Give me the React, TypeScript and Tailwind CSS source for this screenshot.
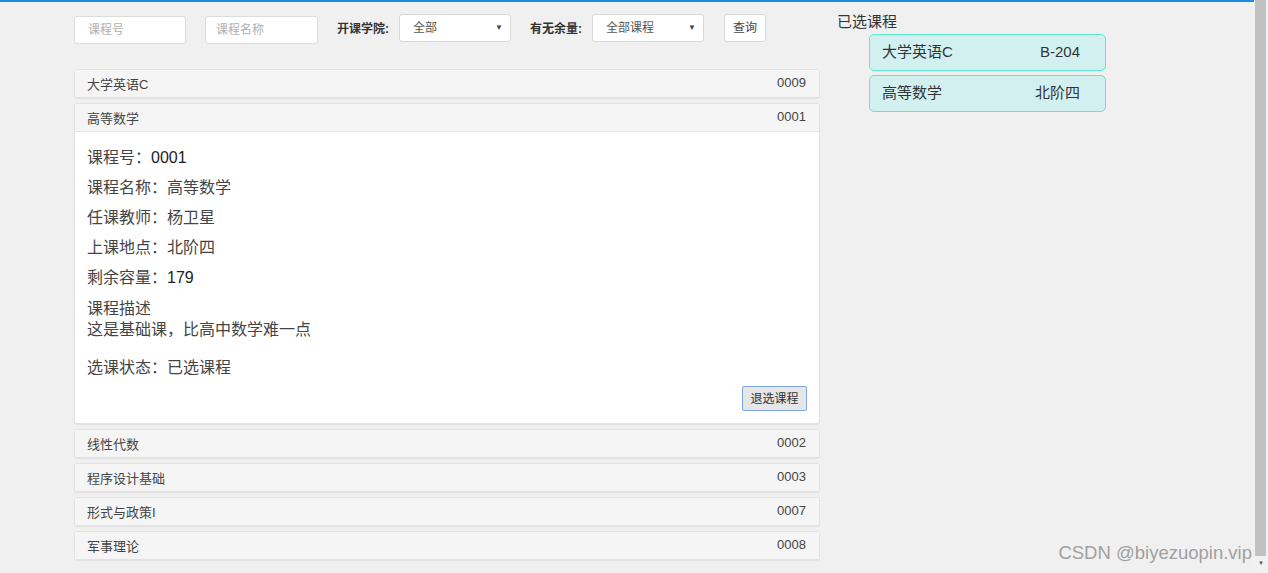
import React from "react";

const courses = [
  { name: "大学英语C", id: "0009" },
  { name: "高等数学", id: "0001", open: true },
  { name: "线性代数", id: "0002" },
  { name: "程序设计基础", id: "0003" },
  { name: "形式与政策I", id: "0007" },
  { name: "军事理论", id: "0008" },
];

const selected = [
  { name: "大学英语C", room: "B-204" },
  { name: "高等数学", room: "北阶四" },
];

function Select({ value }: { value: string }) {
  return (
    <div className="flex h-[28px] w-[112px] items-center justify-between rounded-[3px] border border-[#d9d9d9] bg-white pl-[13px] pr-[7px] text-[12px] text-[#555]">
      <span>{value}</span>
      <span className="text-[8px] text-[#444]">▼</span>
    </div>
  );
}

export default function App() {
  return (
    <div
      className="relative flex h-[573px] w-[1268px] overflow-hidden bg-[#f0f0f0] text-[#333]"
      style={{ fontFamily: '"Liberation Sans", "Noto Sans CJK SC", sans-serif' }}
    >
      <div className="flex w-[1254px] flex-col">
        <div className="h-[2px] bg-[#1a8be8]" />
        <div className="flex">
          <div className="ml-[74px] w-[746px]">
            <div className="mt-[12px] flex items-start text-[12px]">
              <div className="mt-[2px] flex h-[28px] w-[112px] items-center rounded-[3px] border border-[#dcdcdc] bg-white pl-[13px] text-[#b0b0b0]">
                课程号
              </div>
              <div className="ml-[19px] mt-[2px] flex h-[28px] w-[113px] items-center rounded-[3px] border border-[#dcdcdc] bg-white pl-[10px] text-[#b0b0b0]">
                课程名称
              </div>
              <span className="ml-[19px] mr-[10px] mt-[6px] font-bold text-[#333]">开课学院:</span>
              <Select value="全部" />
              <span className="ml-[19px] mr-[10px] mt-[6px] font-bold text-[#333]">有无余量:</span>
              <Select value="全部课程" />
              <div className="ml-[20px] flex h-[28px] w-[42px] items-center justify-center rounded-[3px] border border-[#d9d9d9] bg-white text-[#444]">
                查询
              </div>
            </div>
            <div className="mt-[25px] flex flex-col gap-[5px]">
              {courses.map((c) => (
                <div
                  key={c.id}
                  className="rounded-[3px] border border-[#e2e2e2] bg-white shadow-[0_1px_1px_rgba(0,0,0,0.06)]"
                >
                  <div className="flex h-[27px] items-center justify-between bg-[#f5f5f5] pl-[12px] pr-[13px] text-[13px] text-[#444]">
                    <span className="mt-[2px]">{c.name}</span>
                    <span className="-mt-[2px]">{c.id}</span>
                  </div>
                  {c.open && (
                    <div className="border-t border-[#e6e6e6] pb-[12px] pl-[12px] pr-[12px] pt-[11px] text-[16px] text-[#444]">
                      <div className="leading-[30px]">
                        课程号：<span className="text-[#222]">0001</span>
                      </div>
                      <div className="leading-[30px]">课程名称：高等数学</div>
                      <div className="leading-[30px]">任课教师：杨卫星</div>
                      <div className="leading-[30px]">上课地点：北阶四</div>
                      <div className="leading-[30px]">
                        剩余容量：<span className="text-[#222]">179</span>
                      </div>
                      <div className="mt-[5px] leading-[21px]">
                        课程描述
                        <br />
                        这是基础课，比高中数学难一点
                      </div>
                      <div className="mt-[13px] leading-[30px]">选课状态：已选课程</div>
                      <div className="mt-[3px] flex justify-end">
                        <div className="flex h-[25px] w-[65px] items-center justify-center rounded-[2px] border border-[#7ea6ea] bg-[#e6e6e6] text-[12px] text-[#333]">
                          退选课程
                        </div>
                      </div>
                    </div>
                  )}
                </div>
              ))}
            </div>
          </div>
          <div className="ml-[17px] w-[270px]">
            <div className="mt-[10px] text-[15px] leading-[20px] text-[#333]">已选课程</div>
            <div className="ml-[32px] mt-[2px] flex flex-col gap-[4px]">
              {selected.map((s) => (
                <div
                  key={s.name}
                  className="flex h-[37px] w-[237px] items-center justify-between rounded-[5px] border border-[#5eeacb] bg-[#d3f0f0] pl-[12px] pr-[25px] text-[15px] text-[#333]"
                >
                  <span>{s.name}</span>
                  <span>{s.room}</span>
                </div>
              ))}
            </div>
          </div>
        </div>
      </div>
      <div className="absolute bottom-[9px] right-[16px] text-[18.5px] leading-[22px] text-[#a0a0a0]">
        CSDN @biyezuopin.vip
      </div>
      <div className="flex w-[14px] flex-col bg-[#f1f1f1]">
        <div className="ml-[1px] h-[556px] w-[11px] bg-[#c1c1c1]" />
        <div className="mt-[4px] text-center text-[6px] leading-none text-[#555]">▼</div>
      </div>
    </div>
  );
}
